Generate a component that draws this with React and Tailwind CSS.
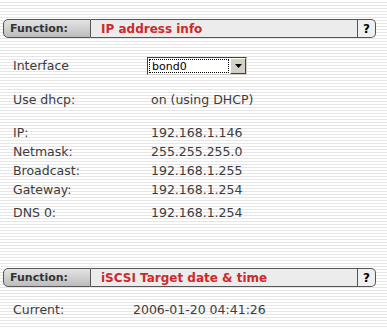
import React from 'react';

const FunctionBar = ({ title }) => (
  <div className="flex h-[19px] w-[373px] text-[11px] font-bold leading-none">
    <div className="flex w-[88px] items-center rounded-l-[5px] border border-[#555] bg-gradient-to-b from-[#e4e4e4] via-[#d0d0d0] to-[#bcbcbc] pl-[6px] text-[#333]">
      Function:
    </div>
    <div className="flex flex-1 items-center border-y border-r border-[#555] bg-[#ececec] pl-[10px] text-[12px] text-[#cc2a2a]">
      {title}
    </div>
    <div className="flex w-[18px] items-center justify-center rounded-r-[5px] border-y border-r border-[#555] bg-[#f0f0f0] text-[12px] text-black">
      ?
    </div>
  </div>
);

const Row = ({ label, value, className = '' }) => (
  <div className={`flex h-[19px] items-center ${className}`}>
    <div className="w-[138px]">{label}</div>
    <div>{value}</div>
  </div>
);

const FakeSelect = () => (
  <div className="flex h-[18px] w-[100px] border border-t-[#404040] border-l-[#404040] border-b-[#d4d0c8] border-r-[#d4d0c8] bg-white">
    <div className="m-[1px] flex flex-1 items-center border border-dotted border-black pl-[2px] text-[11px] leading-none text-black">
      bond0
    </div>
    <div className="flex w-[16px] items-center justify-center border border-t-white border-l-white border-b-[#404040] border-r-[#404040] bg-[#d4d0c8]">
      <svg width="7" height="4" viewBox="0 0 7 4">
        <path d="M0 0h7L3.5 4z" fill="#000" />
      </svg>
    </div>
  </div>
);

export default function App() {
  return (
    <div className="h-[329px] w-[387px] overflow-hidden bg-[repeating-linear-gradient(to_bottom,#ffffff_0px,#ffffff_2px,#e6e6e6_2px,#e6e6e6_3px)] font-['DejaVu_Sans',sans-serif] text-[12.5px] text-[#3c3c3c]">
      <div className="pl-[3px] pt-[19px]">
        <FunctionBar title="IP address info" />
      </div>

      <div className="pl-[13px]">
        <div className="mt-[19px] flex h-[18px] items-center">
          <div className="w-[134px]">Interface</div>
          <FakeSelect />
        </div>
        <Row label="Use dhcp:" value="on (using DHCP)" className="mt-[16px]" />
        <Row label="IP:" value="192.168.1.146" className="mt-[14px]" />
        <Row label="Netmask:" value="255.255.255.0" />
        <Row label="Broadcast:" value="192.168.1.255" />
        <Row label="Gateway:" value="192.168.1.254" />
        <Row label="DNS 0:" value="192.168.1.254" className="mt-[4px]" />
      </div>

      <div className="mt-[45px] pl-[3px]">
        <FunctionBar title="iSCSI Target date & time" />
      </div>

      <div className="mt-[14px] flex h-[19px] items-center pl-[13px]">
        <div className="w-[120px]">Current:</div>
        <div>2006-01-20 04:41:26</div>
      </div>
    </div>
  );
}
